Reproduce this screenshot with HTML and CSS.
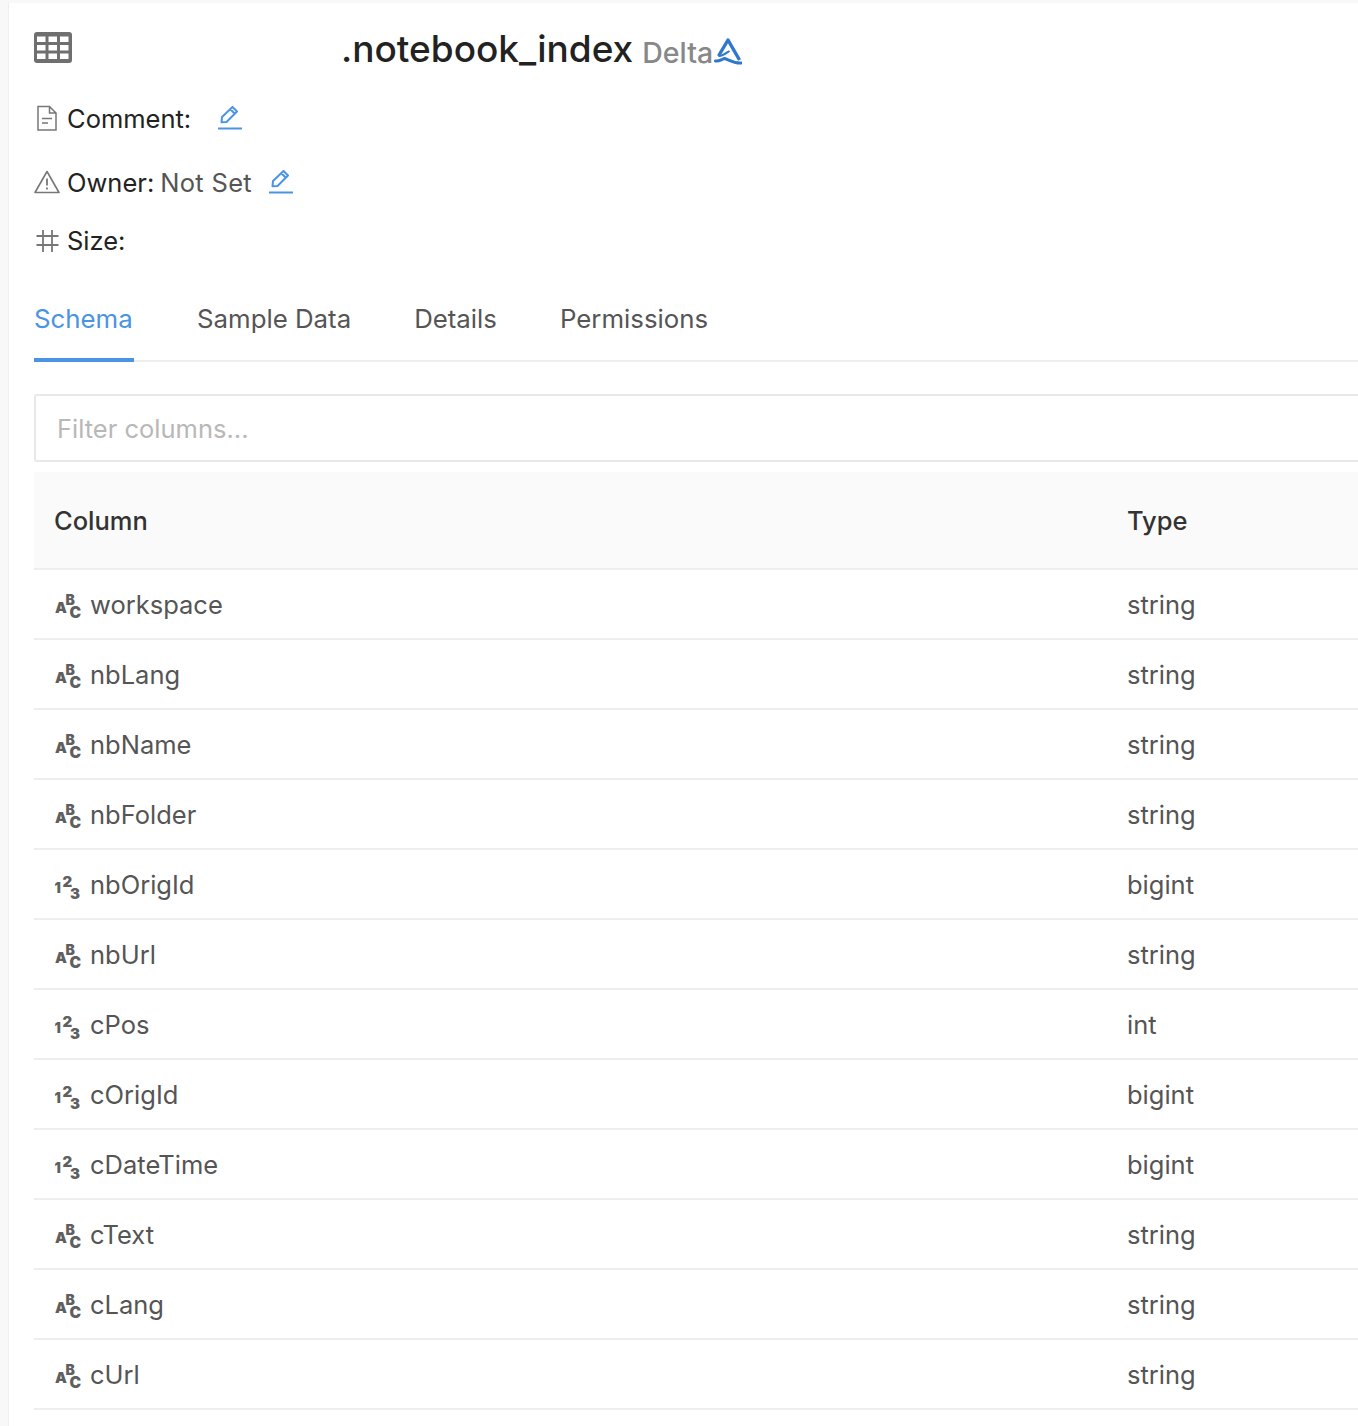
FILE: index.html
```html
<!DOCTYPE html>
<html lang="en">
<head>
<meta charset="utf-8">
<title>notebook_index</title>
<link rel="stylesheet" href="styles.css">
</head>
<body>
<svg class="defs" width="0" height="0" aria-hidden="true">
  <symbol id="pen" viewBox="0 0 24 24">
    <path d="M3.500 16.200 L4 11 L14.500 1 L19 5.500 L8.500 16 Z M12.300 3.200 L16.800 7.700" fill="none" stroke="#4a94e3" stroke-width="2" stroke-linejoin="round"/>
    <path d="M0 22.500 H24" stroke="#4a94e3" stroke-width="2"/>
  </symbol>
</svg>
<main class="panel">
  <header class="title-row">
    <svg class="table-icon" width="38" height="31" viewBox="0 0 38 31">
      <rect width="38" height="31" rx="3" fill="#6f6f6f"/>
      <g fill="#fff">
        <rect x="3" y="4.500" width="8.500" height="5.500"/><rect x="14.500" y="4.500" width="8.500" height="5.500"/><rect x="26" y="4.500" width="8.500" height="5.500"/>
        <rect x="3" y="13" width="8.500" height="5.500"/><rect x="14.500" y="13" width="8.500" height="5.500"/><rect x="26" y="13" width="8.500" height="5.500"/>
        <rect x="3" y="21.500" width="8.500" height="5.500"/><rect x="14.500" y="21.500" width="8.500" height="5.500"/><rect x="26" y="21.500" width="8.500" height="5.500"/>
      </g>
    </svg>
    <h1 class="title">.notebook_index</h1>
    <span class="format">Delta</span>
    <svg class="delta" width="28" height="30" viewBox="0 0 28 30">
      <path d="M4.500 19 L14 3 L25.500 23" fill="none" stroke="#2f78c9" stroke-width="3.400" stroke-linejoin="round"/>
      <path d="M4.500 19 C8 19.500 11 17 15.500 14" fill="none" stroke="#2f78c9" stroke-width="2"/>
      <path d="M1.500 24 C5.500 24.500 8 22 10.500 21.500 C14 22 19 26.500 27 26" fill="none" stroke="#2f78c9" stroke-width="3" stroke-linecap="round"/>
    </svg>
  </header>

  <div class="meta meta-comment">
    <svg class="meta-icon raise" width="26" height="26" viewBox="0 0 26 26">
      <path d="M4 1.500 H15.500 L22 8 V25 H4 Z M15.500 1.500 V8 H22 M8 13.500 H18 M8 18 H14" fill="none" stroke="#777" stroke-width="1.500"/>
    </svg>
    <span class="label">Comment:</span>
    <svg class="pen pen-comment" width="24" height="24"><use href="#pen"/></svg>
  </div>
  <div class="meta meta-owner">
    <svg class="meta-icon raise" width="26" height="26" viewBox="0 0 26 26">
      <path d="M13 2.500 L25 23.500 H1 Z" fill="none" stroke="#777" stroke-width="1.600" stroke-linejoin="round"/>
      <path d="M13 9.500 V16.500 M13 18.500 V20.500" stroke="#777" stroke-width="1.800"/>
    </svg>
    <span class="label">Owner:</span><span class="value">Not Set</span>
    <svg class="pen pen-owner" width="24" height="24"><use href="#pen"/></svg>
  </div>
  <div class="meta meta-size">
    <svg class="meta-icon raise" width="26" height="26" viewBox="0 0 26 26">
      <path d="M9 3 V25 M18 3 V25 M2.500 9 H24.500 M2.500 18 H24.500" fill="none" stroke="#777" stroke-width="1.800"/>
    </svg>
    <span class="label">Size:</span>
  </div>

  <nav class="tabs">
    <span class="tab active">Schema</span>
    <span class="tab">Sample Data</span>
    <span class="tab">Details</span>
    <span class="tab">Permissions</span>
  </nav>

  <input class="filter" type="text" placeholder="Filter columns...">

  <table class="schema">
    <thead><tr><th class="col-name">Column</th><th>Type</th></tr></thead>
    <tbody>
      <tr><td><svg class="type-icon" width="26" height="26"><text class="g" x="1" y="19" font-size="15">A</text><text class="g" x="11.500" y="11" font-size="14">B</text><text class="g" x="15.500" y="24" font-size="15.500">C</text></svg>workspace</td><td>string</td></tr>
      <tr><td><svg class="type-icon" width="26" height="26"><text class="g" x="1" y="19" font-size="15">A</text><text class="g" x="11.500" y="11" font-size="14">B</text><text class="g" x="15.500" y="24" font-size="15.500">C</text></svg>nbLang</td><td>string</td></tr>
      <tr><td><svg class="type-icon" width="26" height="26"><text class="g" x="1" y="19" font-size="15">A</text><text class="g" x="11.500" y="11" font-size="14">B</text><text class="g" x="15.500" y="24" font-size="15.500">C</text></svg>nbName</td><td>string</td></tr>
      <tr><td><svg class="type-icon" width="26" height="26"><text class="g" x="1" y="19" font-size="15">A</text><text class="g" x="11.500" y="11" font-size="14">B</text><text class="g" x="15.500" y="24" font-size="15.500">C</text></svg>nbFolder</td><td>string</td></tr>
      <tr><td><svg class="type-icon" width="26" height="26"><text class="g" x="0.500" y="18.500" font-size="14">1</text><text class="g" x="8.500" y="13" font-size="15">2</text><text class="g" x="16" y="25" font-size="15">3</text></svg>nbOrigId</td><td>bigint</td></tr>
      <tr><td><svg class="type-icon" width="26" height="26"><text class="g" x="1" y="19" font-size="15">A</text><text class="g" x="11.500" y="11" font-size="14">B</text><text class="g" x="15.500" y="24" font-size="15.500">C</text></svg>nbUrl</td><td>string</td></tr>
      <tr><td><svg class="type-icon" width="26" height="26"><text class="g" x="0.500" y="18.500" font-size="14">1</text><text class="g" x="8.500" y="13" font-size="15">2</text><text class="g" x="16" y="25" font-size="15">3</text></svg>cPos</td><td>int</td></tr>
      <tr><td><svg class="type-icon" width="26" height="26"><text class="g" x="0.500" y="18.500" font-size="14">1</text><text class="g" x="8.500" y="13" font-size="15">2</text><text class="g" x="16" y="25" font-size="15">3</text></svg>cOrigId</td><td>bigint</td></tr>
      <tr><td><svg class="type-icon" width="26" height="26"><text class="g" x="0.500" y="18.500" font-size="14">1</text><text class="g" x="8.500" y="13" font-size="15">2</text><text class="g" x="16" y="25" font-size="15">3</text></svg>cDateTime</td><td>bigint</td></tr>
      <tr><td><svg class="type-icon" width="26" height="26"><text class="g" x="1" y="19" font-size="15">A</text><text class="g" x="11.500" y="11" font-size="14">B</text><text class="g" x="15.500" y="24" font-size="15.500">C</text></svg>cText</td><td>string</td></tr>
      <tr><td><svg class="type-icon" width="26" height="26"><text class="g" x="1" y="19" font-size="15">A</text><text class="g" x="11.500" y="11" font-size="14">B</text><text class="g" x="15.500" y="24" font-size="15.500">C</text></svg>cLang</td><td>string</td></tr>
      <tr><td><svg class="type-icon" width="26" height="26"><text class="g" x="1" y="19" font-size="15">A</text><text class="g" x="11.500" y="11" font-size="14">B</text><text class="g" x="15.500" y="24" font-size="15.500">C</text></svg>cUrl</td><td>string</td></tr>
    </tbody>
  </table>
</main>
</body>
</html>
```
FILE: styles.css
```css
* { box-sizing: border-box; }
html, body { margin: 0; height: 1426px; overflow: hidden; background: #f8f8f8; }
body { padding: 3px 0 0 8px; font-family: Inter, "Liberation Sans", sans-serif; font-size: 25.5px; color: #555; }
.defs { position: absolute; }
.g { font-family: Inter, "Liberation Sans", sans-serif; font-weight: 900; fill: #5f5f5f; }
.panel { width: 1350px; height: 1423px; background: #fff; border-left: 1px solid #eee; padding-left: 25px; overflow: hidden; }

.title-row { display: flex; align-items: flex-start; height: 75px; padding-top: 29px; }
.table-icon { flex: none; }
.title { margin: -5px 0 0 269px; font-size: 37px; line-height: 44px; font-weight: 500; color: #222; white-space: nowrap; }
.format { margin: 3px 0 0 9px; font-size: 28.5px; line-height: 36px; font-weight: 500; color: #888; }
.delta { margin: 5px 0 0 1px; flex: none; }

.meta { display: flex; align-items: center; height: 32px; line-height: 32px; }
.meta-comment { margin-top: 25px; }
.meta-owner { margin-top: 32px; }
.meta-size { margin-top: 26px; }
.meta-icon { flex: none; margin-right: 7px; }
.raise { margin-top: -2px; }
.label { color: #222; }
.value { margin-left: 6px; color: #555; letter-spacing: 0.3px; }
.pen { flex: none; margin-top: -2px; }
.pen-comment { margin-left: 27px; }
.pen-owner { margin-left: 17px; }

.tabs { display: flex; gap: 63px; margin-top: 33px; height: 72px; border-bottom: 2px solid #eee; font-size: 25.8px; }
.tab { height: 72px; padding-top: 11px; line-height: 36px; white-space: nowrap; }
.tab.active { color: #4a94e3; border-bottom: 4px solid #4a94e3; width: 100px; }

.filter { display: block; width: 1340px; height: 68px; margin-top: 32px; padding: 0 21px; border: 2px solid #e8e8e8; border-radius: 3px; font: inherit; outline: none; }
.filter::placeholder { color: #b8b8b8; opacity: 1; }

.schema { width: 1324px; margin-top: 10px; border-collapse: collapse; table-layout: fixed; }
.schema th { height: 97px; padding: 0 0 0 20px; background: #fafafa; border-bottom: 2px solid #eee; text-align: left; font-weight: 500; color: #333; }
.schema .col-name { width: 1073px; }
.schema td { height: 70px; padding: 0 0 0 20px; border-bottom: 2px solid #eee; white-space: nowrap; }
.type-icon { vertical-align: -6px; margin-right: 10px; overflow: visible; }
```
